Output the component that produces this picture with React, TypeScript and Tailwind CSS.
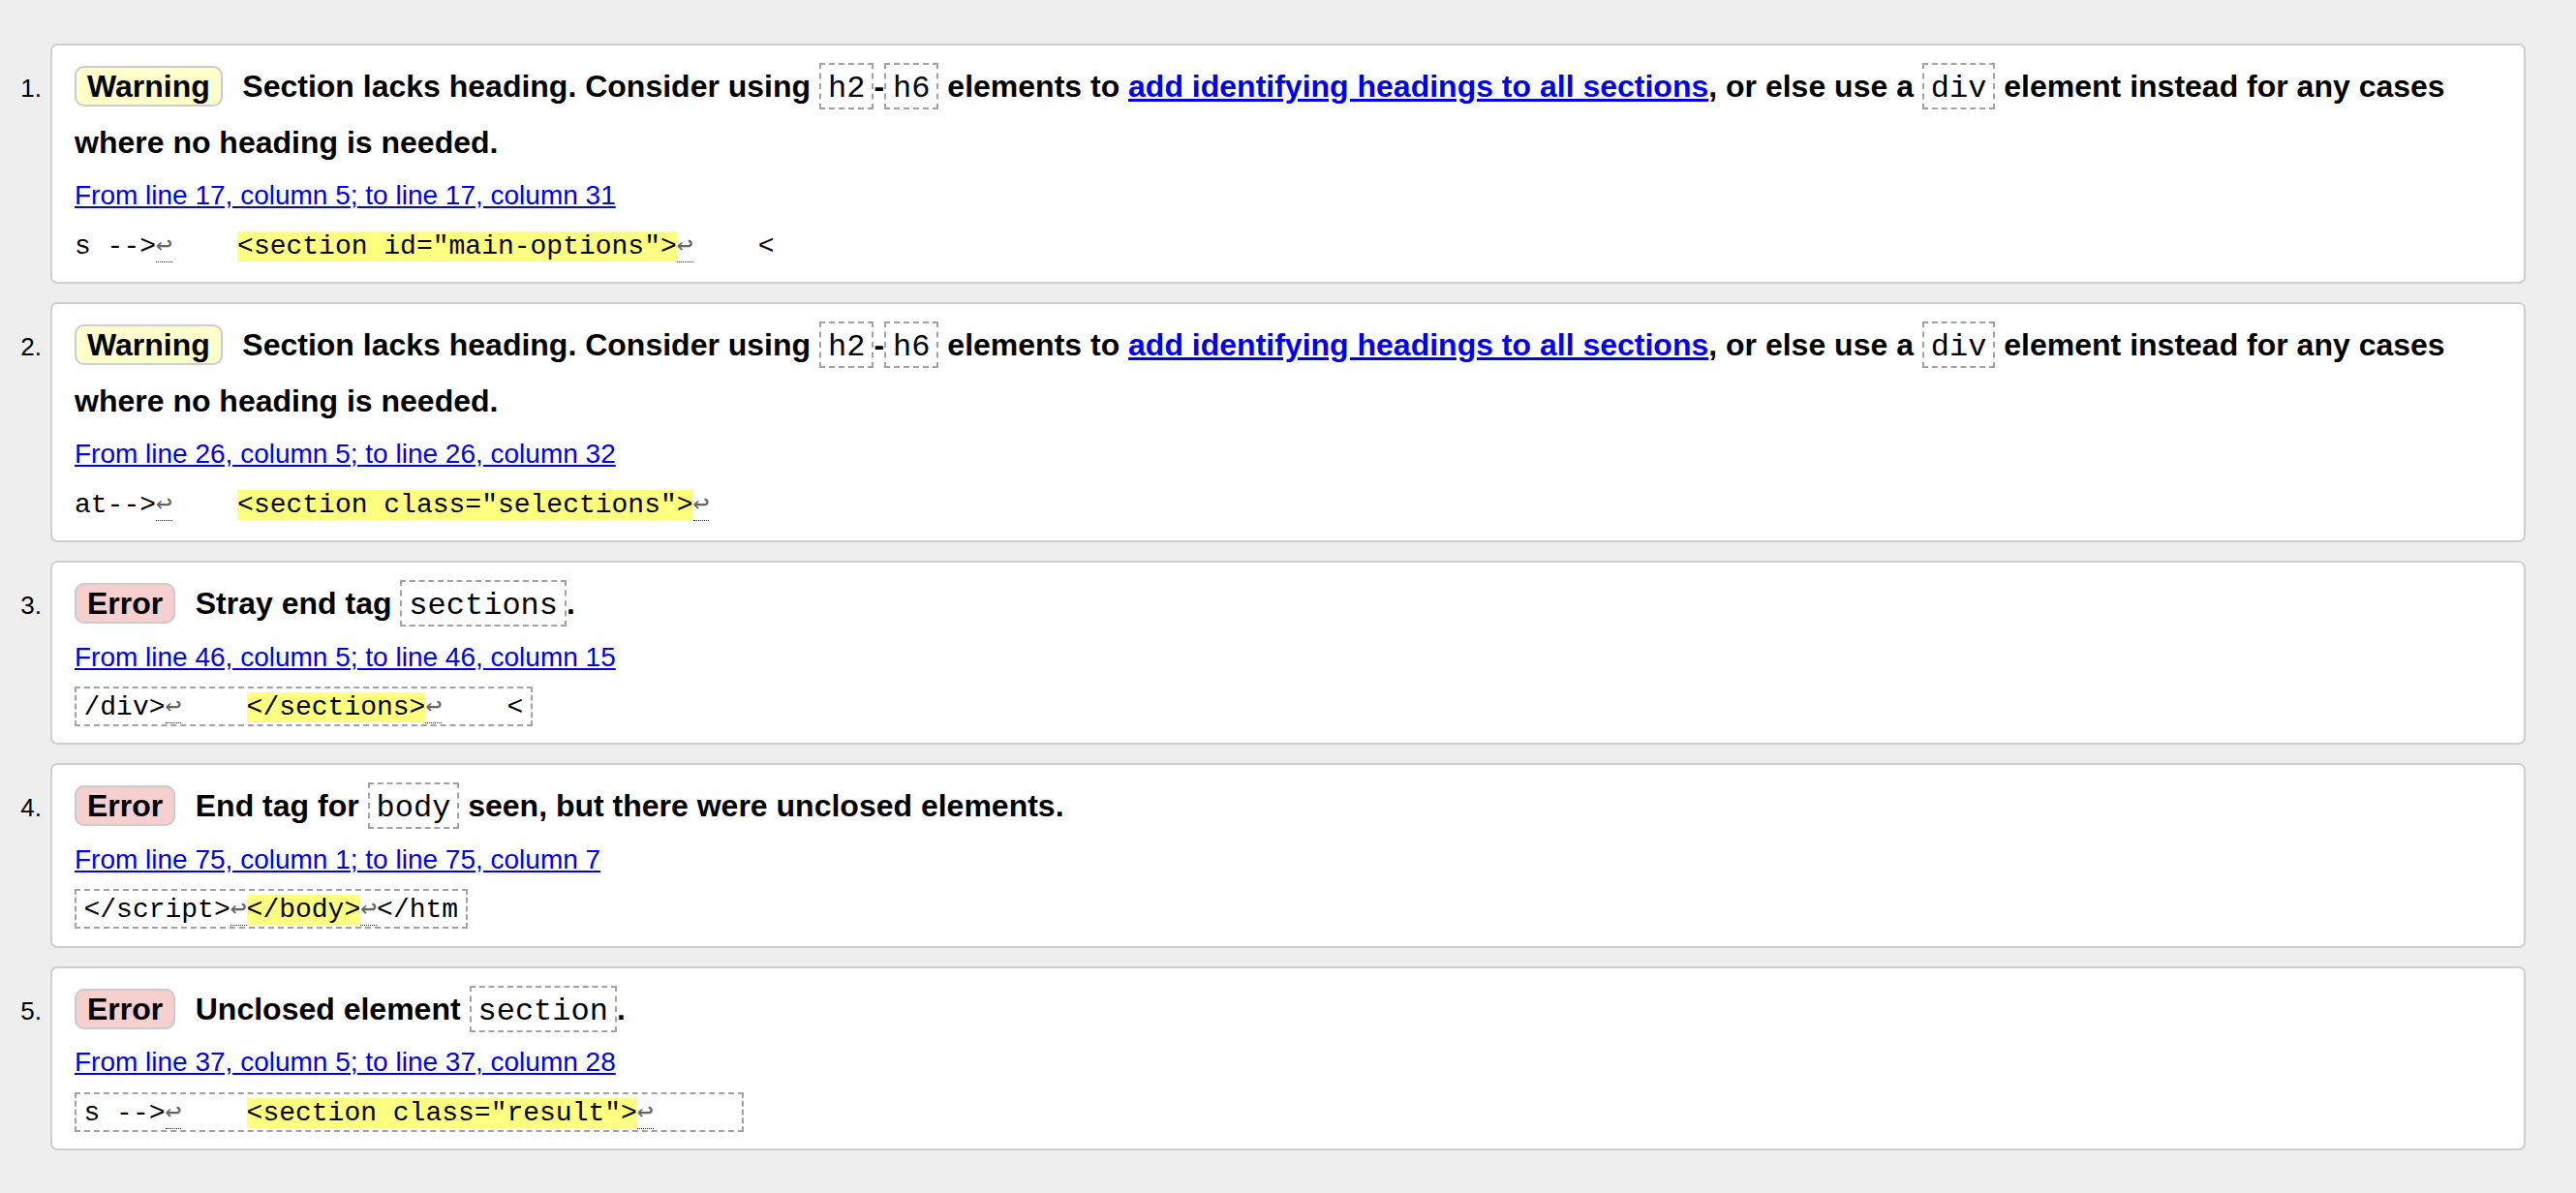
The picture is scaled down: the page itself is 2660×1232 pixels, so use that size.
import React from "react";

const Ret = () => (
  <span className="text-[#666] border-b border-dotted border-[#333] leading-none">↩</span>
);

const Hl = ({ children }: { children: React.ReactNode }) => (
  <mark className="bg-[#ffff80] text-black">{children}</mark>
);

const C = ({ children }: { children: React.ReactNode }) => (
  <code className="font-['Liberation_Mono','DejaVu_Sans_Mono',monospace] font-normal text-[32px] leading-none border-2 border-dashed border-[#a3a3a3] px-[7px] pt-[6px] pb-[1px]">
    {children}
  </code>
);

const Badge = ({ kind }: { kind: "Warning" | "Error" }) => (
  <strong
    className={
      "font-bold border-2 border-[#cccccc] rounded-[10px] px-[11px] py-[1px] mr-[20.5px] " +
      (kind === "Warning" ? "bg-[#ffffcc]" : "bg-[#f6cfcf]")
    }
  >
    {kind}
  </strong>
);

const SectionMsg = () => (
  <>
    <Badge kind="Warning" />
    <span>
      Section lacks heading. Consider using <C>h2</C>-<C>h6</C> elements to{" "}
      <a href="#" className="text-[#0000ee] underline">
        add identifying headings to all sections
      </a>
      , or else use a <C>div</C> element instead for any cases where no heading is needed.
    </span>
  </>
);

type Item = {
  msg: React.ReactNode;
  loc: string;
  boxed: boolean;
  code: React.ReactNode;
};

const items: Item[] = [
  {
    msg: <SectionMsg />,
    loc: "From line 17, column 5; to line 17, column 31",
    boxed: false,
    code: (
      <>
        {"s -->"}
        <Ret />
        {"    "}
        <Hl>{'<section id="main-options">'}</Hl>
        <Ret />
        {"    <"}
      </>
    ),
  },
  {
    msg: <SectionMsg />,
    loc: "From line 26, column 5; to line 26, column 32",
    boxed: false,
    code: (
      <>
        {"at-->"}
        <Ret />
        {"    "}
        <Hl>{'<section class="selections">'}</Hl>
        <Ret />
      </>
    ),
  },
  {
    msg: (
      <>
        <Badge kind="Error" />
        <span>
          Stray end tag <C>sections</C>.
        </span>
      </>
    ),
    loc: "From line 46, column 5; to line 46, column 15",
    boxed: true,
    code: (
      <>
        {"/div>"}
        <Ret />
        {"    "}
        <Hl>{"</sections>"}</Hl>
        <Ret />
        {"    <"}
      </>
    ),
  },
  {
    msg: (
      <>
        <Badge kind="Error" />
        <span>
          End tag for <C>body</C> seen, but there were unclosed elements.
        </span>
      </>
    ),
    loc: "From line 75, column 1; to line 75, column 7",
    boxed: true,
    code: (
      <>
        {"</script>"}
        <Ret />
        <Hl>{"</body>"}</Hl>
        <Ret />
        {"</htm"}
      </>
    ),
  },
  {
    msg: (
      <>
        <Badge kind="Error" />
        <span>
          Unclosed element <C>section</C>.
        </span>
      </>
    ),
    loc: "From line 37, column 5; to line 37, column 28",
    boxed: true,
    code: (
      <>
        {"s -->"}
        <Ret />
        {"    "}
        <Hl>{'<section class="result">'}</Hl>
        <Ret />
        {"     "}
      </>
    ),
  },
];

export default function App() {
  return (
    <div className="min-h-screen bg-[#eeeeee] pt-[45px] pr-[52px] pb-[40px] text-black font-['Liberation_Sans',Arial,sans-serif]">
      <ol className="flex flex-col gap-[19px]">
        {items.map((it, i) => (
          <li key={i} className="flex items-baseline">
            <div className="w-[52px] shrink-0 text-right pr-[9px] text-[26px]">{i + 1}.</div>
            <div className="flex-1 bg-white border-2 border-[#cfcfcf] rounded-[7px] pl-[23px] pr-[23px] pt-[14px] pb-[11px]">
              <p className="text-[32px] font-bold leading-[57.6px]">{it.msg}</p>
              <p className="mt-[1px] text-[28px] leading-[50.4px]">
                <a href="#" className="text-[#0000ee] underline">
                  {it.loc}
                </a>
              </p>
              <p className="mt-[2px] text-[28px] leading-[50.4px] whitespace-pre font-['Liberation_Mono','DejaVu_Sans_Mono',monospace]">
                <code
                  className={
                    "font-['Liberation_Mono','DejaVu_Sans_Mono',monospace] " +
                    (it.boxed
                      ? "border-2 border-dashed border-[#a3a3a3] px-[7.5px] pt-[4px] pb-[2px]"
                      : "")
                  }
                >
                  {it.code}
                </code>
              </p>
            </div>
          </li>
        ))}
      </ol>
    </div>
  );
}
